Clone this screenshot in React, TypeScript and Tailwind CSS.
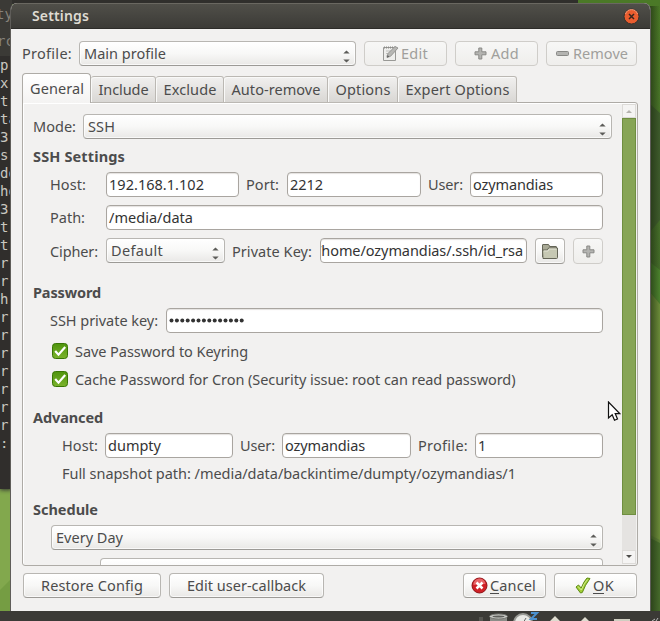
import { useLayoutEffect, useRef, useState, type ReactNode } from "react";

/* A run of text whose tracking is fitted to the width given to it. */
function T({ children, w, className = "" }: { children: string; w: number; className?: string }) {
  const ref = useRef<HTMLSpanElement>(null);
  const [gap, setGap] = useState(0);
  useLayoutEffect(() => {
    if (ref.current) setGap((w - ref.current.getBoundingClientRect().width) / children.length);
  }, []);
  return (
    <span ref={ref} className={`-mt-px mb-px inline-block shrink-0 whitespace-pre ${className}`} style={{ letterSpacing: gap }}>
      {children}
    </span>
  );
}

function Arrows() {
  return (
    <svg width="7" height="13" viewBox="0 0 7 13" className="mt-[5px] mr-[5px] ml-auto shrink-0" fill="#5c5c59">
      <path d="M0.3 3.6 3.5 0.4 6.7 3.6zM0.3 9.4 3.5 12.6 6.7 9.4z" />
    </svg>
  );
}

const button =
  "flex shrink-0 items-center rounded-[4px] border border-[#b8b6b2] border-b-[#9c9a96] bg-linear-to-b from-white via-[#f8f8f7] to-[#e9e8e6] shadow-[inset_0_0_0_1px_rgba(255,255,255,0.7)]";

function Combo({ className, children }: { className: string; children?: ReactNode }) {
  return (
    <div className={`${button} h-[25px] pl-[4px] ${className}`}>
      {children}
      <Arrows />
    </div>
  );
}

function Input({ className, children }: { className: string; children?: ReactNode }) {
  return (
    <div className={`flex h-[25px] shrink-0 items-center overflow-hidden rounded-[4px] border border-[#a9a5a0] bg-white pl-[2px] text-[#333] shadow-[inset_0_1px_1px_#e4e2df] ${className}`}>
      {children}
    </div>
  );
}

function Disabled({ className, children }: { className: string; children: ReactNode }) {
  return (
    <div className={`flex h-[25px] shrink-0 items-center rounded-[4px] border border-[#cfcdc9] bg-linear-to-b from-[#f7f7f6] to-[#efeeec] text-[#a09f9c] ${className}`}>
      {children}
    </div>
  );
}

function Plus() {
  return (
    <svg width="13" height="13" viewBox="0 0 13 13" className="shrink-0">
      <path d="M4.8 1h3v3.800h4.200v3H7.800V12h-3V7.800H1v-3h3.800z" fill="#b4b4b1" stroke="#898986" strokeLinejoin="round" />
    </svg>
  );
}

function Check() {
  return (
    <svg width="16" height="16" viewBox="0 0 16 16" className="shrink-0">
      <defs>
        <linearGradient id="check" x2="0" y2="1">
          <stop stopColor="#4f940c" />
          <stop offset="1" stopColor="#7bb32c" />
        </linearGradient>
      </defs>
      <rect x=".5" y=".5" width="15" height="15" rx="3" fill="url(#check)" stroke="#397604" />
      <path d="m3.2 8 3.300 3.700 6.700-7.600" fill="none" stroke="#fff" strokeWidth="2.200" />
    </svg>
  );
}

const tabs: [string, number, string][] = [
  ["Include", 50, "w-[65px]"],
  ["Exclude", 53, "w-[68px]"],
  ["Auto-remove", 89, "w-[104px]"],
  ["Options", 55, "w-[70px]"],
  ["Expert Options", 104, "w-[119px]"],
];

const terminal = ["p", "xr", "t", "ta", "3", "s", "do", "ho", "3", "t", "t", "r", "r", "h", "r", "r", "r", "r", "r", "r", "r", ":"];

function Desktop() {
  return (
    <svg className="absolute inset-0" width="660" height="621">
      <defs>
        <linearGradient id="wall" x2="0" y2="1">
          <stop stopColor="#4b7927" />
          <stop offset=".5" stopColor="#43692a" />
          <stop offset="1" stopColor="#67863a" />
        </linearGradient>
        <linearGradient id="shade">
          <stop stopColor="#1d2b10" stopOpacity=".65" />
          <stop offset="1" stopColor="#1d2b10" stopOpacity="0" />
        </linearGradient>
      </defs>
      <rect width="660" height="621" fill="#82a84d" />
      <path d="M0 590 11 579V611H0z" fill="#759d43" />
      <rect x="575" width="85" height="621" fill="url(#wall)" />
      <path d="M650 104 660 113V220L650 232z" fill="#3e5b2c" />
      <path d="M650 262 660 270V304L650 292z" fill="#4b812d" />
      <path d="M650 292 660 304V540L650 535z" fill="#6b8b39" />
      <path d="M650 538 660 543V611H650z" fill="#466a2b" />
      <rect x="650" y="6" width="10" height="605" fill="url(#shade)" />
      <rect width="578" height="4" fill="#302f2c" />
    </svg>
  );
}

function Taskbar() {
  return (
    <div className="absolute inset-x-0 top-[611px] h-[10px] bg-[#3b3a36]">
      <svg width="660" height="10" className="block">
        <rect x="479" y="6" width="4" height="4" fill="#555550" />
        <path d="M490 6v4h17V6z" fill="#8b8d88" />
        <ellipse cx="498.500" cy="5.500" rx="9" ry="2.500" fill="#c9cac6" stroke="#777873" />
        <ellipse cx="498.500" cy="5.500" rx="6" ry="1" fill="#5e5f5b" />
        <circle cx="523" cy="12" r="9" fill="#e9e9e5" stroke="#989994" strokeWidth="2" />
        <path d="m523 12 3-5" stroke="#666" />
        <path d="M531 2h6l-6 6h6" fill="none" stroke="#4b91d0" strokeWidth="2" />
        <path d="m555 5 5 5h-10zM585 6l4 4h-8z" fill="#dedbcf" />
        <rect x="614" y="8" width="16" height="2" fill="#cfcec1" />
        <path d="m652 10 3-2M656 10l2-3" stroke="#bbb" />
      </svg>
    </div>
  );
}

export default function App() {
  return (
    <div className="relative h-[621px] w-[660px] overflow-hidden font-['Noto_Sans',sans-serif] text-[14.5px] leading-[20px] text-[#4c4c4c]">
      <Desktop />
      <div className="absolute top-0 left-0 h-[489px] w-[12px] overflow-hidden bg-[#302e2c] font-['DejaVu_Sans_Mono',monospace] text-[14px] leading-[18px] text-[#c9c7c0] shadow-[0_1px_4px_#333]">
        <div className="h-[56px] bg-[#3b3a36] pt-[5px] text-[#85827a]">
          <div className="-ml-[4px] h-[27px]">ty</div>
          <div className="-ml-[3px]">rc</div>
        </div>
        {terminal.map((line, i) => (
          <div key={i} className="h-[18px] whitespace-pre">{line}</div>
        ))}
      </div>
      <Taskbar />

      <div className="absolute top-[3px] left-[10px] flex h-[608px] w-[641px] flex-col overflow-hidden rounded-t-[7px] border-x border-[#5f5d59] bg-[#f2f1f0]">
        <div className="flex h-[26px] shrink-0 items-center border-t border-b border-t-[#6a6861] border-b-[#2d2c29] bg-linear-to-b from-[#504f49] to-[#3c3b37] pr-[10px] pl-[21px] text-[#dfdbd2]">
          <T w={57} className="mt-0! mb-0! text-[14px] font-semibold">Settings</T>
          <svg width="17" height="17" viewBox="0 0 17 17" className="ml-auto">
            <circle cx="8.500" cy="8.500" r="7.500" fill="#e95d2f" stroke="#35322d" />
            <path d="M2.500 6a6.300 6.300 0 0 1 12 0" fill="none" stroke="#f59b79" />
            <path d="m6 6 5 5m0-5-5 5" stroke="#37251d" strokeWidth="1.500" />
          </svg>
        </div>

        <div className="mt-[12px] flex h-[25px] shrink-0 items-center pl-[11px]">
          <div className="w-[57px]"><T w={50}>Profile:</T></div>
          <Combo className="w-[277px]"><T w={82}>Main profile</T></Combo>
          <Disabled className="ml-[8px] w-[83px] pl-[17px]">
            <svg width="17" height="17" viewBox="0 0 17 17" className="mr-[2px] shrink-0" fill="none">
              <path d="M1.500 2.500h12v13h-12z" fill="#eeeeec" stroke="#999996" />
              <path d="M2 2.500h11" stroke="#8c8c88" strokeWidth="2" strokeDasharray="1 1" />
              <path d="M4 6h6M4 8.500h4M4 11h3" stroke="#c1c1be" />
              <path d="m5 12.500 1-4 7-7 3 1.500-7.500 8.300z" fill="#b7b7b4" stroke="#969693" />
              <path d="m5 12.500.7-2.200 1.500 1.200z" fill="#555" />
            </svg>
            <T w={27}>Edit</T>
          </Disabled>
          <Disabled className="ml-[8px] w-[83px] pl-[18px]"><Plus /><T w={28} className="ml-[4px]">Add</T></Disabled>
          <Disabled className="ml-[8px] w-[91px] pl-[9px]">
            <svg width="13" height="13" viewBox="0 0 13 13" className="shrink-0"><rect x=".5" y="4.500" width="12" height="4" rx="1" fill="#b4b4b1" stroke="#898986" /></svg>
            <T w={55} className="ml-[4px]">Remove</T>
          </Disabled>
        </div>

        <div className="relative z-10 mt-[7px] -mb-[1px] flex h-[30px] shrink-0 items-end pl-[11px]">
          <div className="h-[30px] w-[69px] rounded-t-[4px] border border-b-0 border-[#aeaba6] bg-linear-to-b from-white to-[#f4f3f2] pt-[4px] pl-[7px] shadow-[inset_0_1px_0_#fff]"><T w={54}>General</T></div>
          {tabs.map(([label, width, size]) => (
            <div key={label} className={`h-[27px] rounded-t-[3px] border border-l-0 border-[#bbb8b3] bg-linear-to-b from-[#f1f0ef] to-[#d9d7d4] pt-[2px] pl-[7.5px] shadow-[inset_1px_1px_0_#f9f9f8] ${size}`}><T w={width}>{label}</T></div>
          ))}
        </div>

        <div className="ml-[11px] flex h-[464px] w-[616px] shrink-0 overflow-hidden rounded-[3px] rounded-tl-none border border-[#aeaba6] shadow-[inset_1px_1px_0_#fff]">
          <div className="flex w-[599px] shrink-0 flex-col overflow-hidden pl-[10px]">
            <div className="mt-[11px] flex h-[25px] shrink-0 items-center">
              <div className="w-[50px]"><T w={43}>Mode:</T></div>
              <Combo className="w-[529px]"><T w={27}>SSH</T></Combo>
            </div>
            <div className="mt-[7px] h-[20px] shrink-0 font-bold"><T w={92}>SSH Settings</T></div>
            <div className="mt-[6px] flex h-[25px] shrink-0 items-center pl-[17px]">
              <div className="w-[56px]"><T w={36}>Host:</T></div>
              <Input className="w-[133px]"><T w={95}>192.168.1.102</T></Input>
              <div className="ml-[7px] w-[41px]"><T w={33}>Port:</T></div>
              <Input className="w-[134px]"><T w={33}>2212</T></Input>
              <div className="ml-[7px] w-[42px]"><T w={35}>User:</T></div>
              <Input className="w-[133px]"><T w={80}>ozymandias</T></Input>
            </div>
            <div className="mt-[8px] flex h-[25px] shrink-0 items-center pl-[17px]">
              <div className="w-[56px]"><T w={35}>Path:</T></div>
              <Input className="w-[497px]"><T w={84}>/media/data</T></Input>
            </div>
            <div className="mt-[8px] flex h-[26px] shrink-0 items-start pl-[17px]">
              <div className="w-[56px] pt-[3px]"><T w={48}>Cipher:</T></div>
              <Combo className="w-[119px]"><T w={52}>Default</T></Combo>
              <div className="ml-[7px] w-[88px] pt-[3px]"><T w={80}>Private Key:</T></div>
              <Input className="w-[207px]"><T w={207} className="-ml-[7px]">/home/ozymandias/.ssh/id_rsa</T></Input>
              <div className={`${button} ml-[8px] h-[26px] w-[30px] justify-center`}>
                <svg width="18" height="17" viewBox="0 0 18 17">
                  <path d="M1.500 14V2q0-.5.5-.5h5.500q.5 0 1 2H15q.5 0 .5.500v2" fill="#a8a995" stroke="#646557" />
                  <path d="M2 15.500 1.500 7h5l1-2h9v9.500q0 1-1 1z" fill="#c6c8b3" stroke="#646557" strokeLinejoin="round" />
                  <path d="M3 8h4l1-2h7.500" stroke="#e2e3d5" fill="none" />
                </svg>
              </div>
              <Disabled className="ml-[8px] h-[26px]! w-[30px] justify-center"><Plus /></Disabled>
            </div>
            <div className="mt-[18px] h-[20px] shrink-0 font-bold"><T w={68}>Password</T></div>
            <div className="mt-[6px] flex h-[25px] shrink-0 items-center pl-[17px]">
              <div className="w-[116px]"><T w={108}>SSH private key:</T></div>
              <Input className="w-[437px]">
                <svg width="78" height="7" fill="#333">
                  {Array.from({ length: 14 }, (_, i) => <circle key={i} cx={2.5 + i * 5.4} cy="3.500" r="2" />)}
                </svg>
              </Input>
            </div>
            <div className="mt-[8px] flex h-[20px] shrink-0 items-center pl-[19px]"><Check /><T w={173} className="mt-0! mb-0! ml-[7px]">Save Password to Keyring</T></div>
            <div className="mt-[8px] flex h-[20px] shrink-0 items-center pl-[19px]"><Check /><T w={440.500} className="mt-0! mb-0! ml-[7px]">Cache Password for Cron (Security issue: root can read password)</T></div>
            <div className="mt-[18px] h-[20px] shrink-0 font-bold"><T w={70}>Advanced</T></div>
            <div className="mt-[6px] flex h-[25px] shrink-0 items-center pl-[29px]">
              <div className="w-[43px]"><T w={36}>Host:</T></div>
              <Input className="w-[128px]"><T w={53}>dumpty</T></Input>
              <div className="ml-[7px] w-[42px]"><T w={35}>User:</T></div>
              <Input className="w-[129px]"><T w={80}>ozymandias</T></Input>
              <div className="ml-[7px] w-[57px]"><T w={50}>Profile:</T></div>
              <Input className="w-[128px]"><T w={8}>1</T></Input>
            </div>
            <div className="mt-[5px] h-[20px] shrink-0 pl-[29px]"><T w={454}>Full snapshot path: /media/data/backintime/dumpty/ozymandias/1</T></div>
            <div className="mt-[16px] h-[20px] shrink-0 font-bold"><T w={65}>Schedule</T></div>
            <Combo className="mt-[6px] ml-[18px] w-[552px]"><T w={67}>Every Day</T></Combo>
            <div className={`${button} mt-[8px] ml-[67px] h-[25px] w-[503px]`} />
          </div>
          <div className="mt-px flex h-[460px] w-[14px] shrink-0 flex-col bg-[#e5e3e1]">
            <div className="flex h-[14px] items-center justify-center border border-[#dddbd8] bg-[#f5f4f3]">
              <svg width="6" height="4"><path d="M0 4 3 1l3 3z" fill="#b5b3af" /></svg>
            </div>
            <div className="h-[397px] border border-[#6f8e40] bg-[#87a556]" />
            <div className="mt-auto flex h-[14px] items-center justify-center border border-[#dddbd8] bg-[#f5f4f3]">
              <svg width="6" height="4"><path d="M0 0h6L3 3z" fill="#4c4b48" /></svg>
            </div>
          </div>
        </div>

        <div className="mt-[7px] flex h-[25px] shrink-0 pl-[12px]">
          <div className={`${button} w-[138px] pl-[17px]`}><T w={102}>Restore Config</T></div>
          <div className={`${button} ml-[8px] w-[155px] pl-[17px]`}><T w={119}>Edit user-callback</T></div>
          <div className={`${button} ml-[139px] w-[83px] pl-[7px]`}>
            <svg width="17" height="17" viewBox="0 0 17 17" className="shrink-0">
              <circle cx="8.500" cy="8.500" r="7.500" fill="#cf2026" stroke="#8d1115" />
              <path d="M2.500 8a6 6 0 0 1 12-1Q8 7 2.500 8" fill="#e76468" />
              <path d="m5.500 5.500 6 6m0-6-6 6" stroke="#fff" strokeWidth="2.500" />
            </svg>
            <T w={46} className="ml-[2px]">Cancel</T>
            <span className="mt-[16px] -ml-[46px] h-px w-[9px] bg-[#4c4c4c]" />
          </div>
          <div className={`${button} ml-[8px] w-[83px] pl-[20px]`}>
            <svg width="16" height="17" viewBox="0 0 16 17" className="shrink-0">
              <path d="m1 10 2.500-2 2.700 3Q9 4 12 1l3 .5Q10 8 7.300 15.500L5.500 16z" fill="#a2cf36" stroke="#5d8b13" strokeLinejoin="round" />
              <path d="m3 9.500 3.300 3.500Q9 6 12.500 2.500" fill="none" stroke="#d2ea8e" />
            </svg>
            <T w={21} className="ml-[2px]">OK</T>
            <span className="mt-[16px] -ml-[21px] h-px w-[11px] bg-[#4c4c4c]" />
          </div>
        </div>
      </div>

      <svg className="absolute top-[401px] left-[607px]" width="14" height="21" viewBox="0 0 14 21">
        <path d="M1.500 1v16l3.700-3.300 2.300 5.600 3-1.300-2.300-5.400h4.500z" fill="#fff" stroke="#111" strokeWidth="1.200" />
      </svg>
    </div>
  );
}
